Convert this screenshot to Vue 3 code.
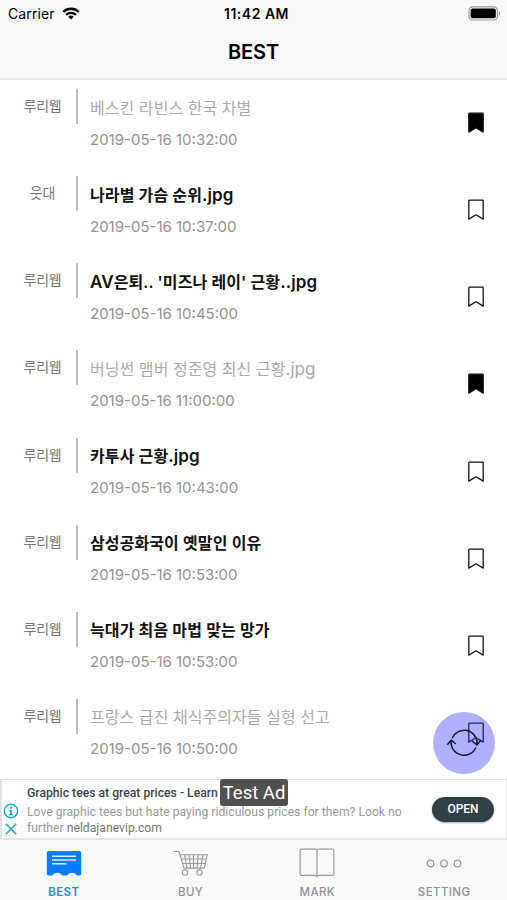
<script setup>
const items = [
  { site: '루리웹', title: '베스킨 라빈스 한국 차별', time: '10:32:00', read: true, marked: true },
  { site: '웃대', title: '나라별 가슴 순위.jpg', time: '10:37:00' },
  { site: '루리웹', title: "AV은퇴.. '미즈나 레이' 근황..jpg", time: '10:45:00' },
  { site: '루리웹', title: '버닝썬 맴버 정준영 최신 근황.jpg', time: '11:00:00', read: true, marked: true },
  { site: '루리웹', title: '카투사 근황.jpg', time: '10:43:00' },
  { site: '루리웹', title: '삼성공화국이 옛말인 이유', time: '10:53:00' },
  { site: '루리웹', title: '늑대가 최음 마법 맞는 망가', time: '10:53:00' },
  { site: '루리웹', title: '프랑스 급진 채식주의자들 실형 선고', time: '10:50:00', read: true },
]

// Latin runs are set slightly larger than Hangul
const runs = (title) => title.split(/([A-Za-z.]*[A-Za-z][A-Za-z.]*)/).filter(Boolean)
const isLatin = (run) => /^[A-Za-z.]+$/.test(run)
</script>

<template>
  <div class="screen">
    <header>
      <div class="status">
        <div class="carrier">
          <span>Carrier</span>
          <svg width="18" height="13" viewBox="0 0 18 13">
            <path d="M1.3 4.8a11.2 11.2 0 0 1 15.4 0M4 7.8a7.4 7.4 0 0 1 10 0" fill="none" stroke="#000" stroke-width="2.3" />
            <path d="M9 12.6 6.2 9.8a4.1 4.1 0 0 1 5.6 0z" />
          </svg>
        </div>
        <div class="clock">11:42 AM</div>
        <div class="battery">
          <svg width="33" height="15" viewBox="0 0 33 15">
            <rect x="1" y=".8" width="28.4" height="13.2" rx="3.6" fill="#fff" stroke="#999" stroke-width="1.2" />
            <rect x="2.6" y="2.5" width="25.2" height="9.8" rx="1.8" />
            <path d="M30.8 5.2c1.7.5 1.7 4 0 4.5z" fill="#888" />
          </svg>
        </div>
      </div>
      <h1>BEST</h1>
    </header>

    <main>
      <article v-for="item in items" :key="item.title" :class="{ read: item.read }">
        <div class="site">{{ item.site }}</div>
        <div class="body">
          <h2><span v-for="(run, i) in runs(item.title)" :key="i" :class="{ latin: isLatin(run) }">{{ run }}</span></h2>
          <time>2019-05-16 {{ item.time }}</time>
        </div>
        <svg class="mark" width="18" height="22" viewBox="0 0 18 22">
          <path d="M2.4 1.2h13.2q.6 0 .6.6v18.3L9 15.8l-7.2 4.3V1.8q0-.6.6-.6z" :fill="item.marked ? '#000' : 'none'" stroke="#111" stroke-width="1.3" stroke-linejoin="round" />
        </svg>
      </article>
      <button class="refresh" aria-label="Refresh">
        <svg width="34" height="30" viewBox="0 0 34 30">
          <g fill="none" stroke="#16162c" stroke-width="1.5" stroke-linecap="round" stroke-linejoin="round">
            <path d="M5.4 9.8A13 13 0 0 1 30 13v3M28.7 20A13 13 0 0 1 4.1 15.8V13" />
            <path d="m.8 16.2 3.3-4 4.3 3.3M25.8 13.5l4.1 3.4 3.3-4" />
          </g>
        </svg>
      </button>
    </main>

    <section class="ad">
      <div class="adicons">
        <svg width="16" height="16" viewBox="0 0 16 16">
          <circle cx="8" cy="8" r="6.7" fill="none" stroke="#16aec4" stroke-width="1.4" />
          <path d="M7 3.8h2v2H7zM6.4 7H9v4h.9v1.2H6.2V11H7V8.2h-.6z" fill="#16aec4" />
        </svg>
        <svg width="14" height="14" viewBox="0 0 14 14">
          <path d="m1.8 1.8 10.4 10.4m0-10.4L1.8 12.2" stroke="#16aec4" stroke-width="1.6" />
        </svg>
      </div>
      <div class="adtext">
        <strong>Graphic tees at great prices - Learn</strong>
        <p>Love graphic tees but hate paying ridiculous prices for them? Look no<br>further <b>neldajanevip.com</b></p>
      </div>
      <div class="open">OPEN</div>
      <div class="test">Test Ad</div>
    </section>

    <nav>
      <div class="tab active">
        <svg width="36" height="32" viewBox="0 0 36 32">
          <path d="M2.500 4h31q1.700 0 1.700 1.700v21.100q0 1.700-1.700 1.700H30.800C29.300 24.800 22.700 24.800 21.200 28.500H16C14.500 24.800 7.900 24.800 6.400 28.500H2.500Q.8 28.500.8 26.800V5.700Q.8 4 2.500 4z" fill="#087cfb" />
          <path d="M6 9.300h24M6 13h24M6 16.800h14.500" stroke="#d9edff" stroke-width="1.400" />
        </svg>
        <span>BEST</span>
      </div>
      <div class="tab">
        <svg width="36" height="32" viewBox="0 0 36 32" fill="none" stroke="#999" stroke-width="1.100">
          <path d="M.8 4.500h4.300q.9 0 1.200 1l4.300 14.600q.3 1 1.300 1h19.600M6.900 7.700h27.400L31.300 21M8 12h25.200M9.300 16.500h22.800M11.500 7.700l2.600 13.300M16 7.700 17.600 21M20.500 7.700V21M25.300 7.700 24 21M30 7.700 27.500 21" />
          <circle cx="12" cy="25.500" r="2.700" />
          <circle cx="26.500" cy="25.500" r="2.700" />
        </svg>
        <span>BUY</span>
      </div>
      <div class="tab">
        <svg width="36" height="32" viewBox="0 0 36 32" fill="none" stroke="#999" stroke-width="1.200">
          <path d="M2.500 2.100h14q1.500 0 1.500 1.200 0-1.200 1.500-1.200h14q1.400 0 1.400 1.400v23.400q0 1.400-1.400 1.400h-14Q18 28.300 18 30q0-1.700-1.500-1.700h-14q-1.400 0-1.400-1.400V3.500q0-1.400 1.400-1.400zM18 2.500v27" />
        </svg>
        <span>MARK</span>
      </div>
      <div class="tab">
        <svg width="36" height="32" viewBox="0 0 36 32" fill="none" stroke="#999" stroke-width="1.300">
          <circle cx="4.500" cy="16.500" r="3.300" />
          <circle cx="18" cy="16.500" r="3.300" />
          <circle cx="31.500" cy="16.500" r="3.300" />
        </svg>
        <span>SETTING</span>
      </div>
    </nav>
  </div>
</template>

<style>
body { margin: 0; background: #fff; }
</style>

<style scoped>
* { box-sizing: border-box; }
.screen { width: 507px; height: 900px; display: flex; flex-direction: column; overflow: hidden; background: #fff; color: #000; font-family: Inter, "Noto Sans CJK KR", sans-serif; }
header { height: 80px; flex: none; background: #f9f9f9; border-bottom: 2px solid #e8e8e8; }
.status { height: 27px; display: grid; grid-template-columns: 1fr auto 1fr; align-items: center; padding: 0 6px 0 8px; font-size: 14px; line-height: 27px; }
.carrier { display: flex; align-items: center; gap: 7px; letter-spacing: .1px; }
.clock { font-weight: 600; letter-spacing: .5px; padding-left: 4px; }
.battery { display: flex; justify-content: flex-end; }
svg { display: block; flex: none; }
h1 { margin: 0; padding-top: 13px; text-align: center; font-size: 20px; line-height: 25px; font-weight: 600; letter-spacing: -.1px; }
main { height: 699px; flex: none; position: relative; overflow: hidden; }
article { height: 87.15px; display: flex; align-items: flex-start; padding: 9px 22px 0 9px; }
.site { width: 69px; height: 35px; flex: none; border-right: 2px solid #bdbdbd; text-align: center; font-size: 14px; line-height: 33px; letter-spacing: -.2px; color: #777; }
.body { flex: 1; padding-left: 12px; }
h2 { margin: 0; padding-top: 4.5px; height: 33.5px; font-size: 16px; line-height: 29px; font-weight: 600; letter-spacing: .1px; color: #111; white-space: nowrap; }
.latin { font-size: 17px; line-height: 1; }
.read h2 { font-weight: 400; letter-spacing: .05px; color: #aaa; }
time { display: block; padding-top: 6px; font-size: 15px; line-height: 22px; color: #929292; white-space: nowrap; }
.mark { margin-top: 23px; }
.refresh { position: absolute; left: 433px; top: 631.5px; width: 62px; height: 62px; padding: 0; border: 0; border-radius: 50%; background: rgba(60, 56, 255, .4); display: flex; align-items: center; justify-content: center; }
.ad { position: relative; height: 61px; flex: none; display: flex; border: solid #e2e2e2; border-width: 1px 1px 2px 2px; background: #fff; font-family: Roboto, sans-serif; }
.adicons { width: 25px; padding: 23px 0 0 1px; display: flex; flex-direction: column; gap: 3px; }
.adicons svg + svg { margin-left: 1px; }
.adtext { flex: 1; padding-top: 5px; white-space: nowrap; }
.adtext strong { display: block; font-size: 12.2px; line-height: 17px; font-weight: 500; color: #37474f; }
.adtext p { margin: 0; padding-top: 2px; font-size: 12.2px; line-height: 16px; color: #999; }
.adtext b { font-weight: 400; color: #777; }
.open { margin: 17px 12px 0 0; width: 62px; height: 25px; border-radius: 13px; background: #2f4047; box-shadow: 0 1px 2px rgba(0,0,0,.35); color: #fff; font-size: 12px; font-weight: 500; line-height: 25px; text-align: center; }
.test { position: absolute; left: 218px; top: -1px; width: 68px; height: 27px; border-radius: 3px; background: #505050; color: #fff; font-size: 18.5px; line-height: 28px; text-align: center; }
nav { flex: 1; display: grid; grid-template-columns: repeat(4, 1fr); background: #f9f9f9; }
.tab { display: flex; flex-direction: column; align-items: center; padding: 7px 0 0 1px; font-size: 11.5px; font-weight: 500; color: #929292; letter-spacing: .4px; }
.tab span { padding-top: 6px; line-height: 14px; }
.active { color: #2289f5; font-weight: 600; }
</style>
